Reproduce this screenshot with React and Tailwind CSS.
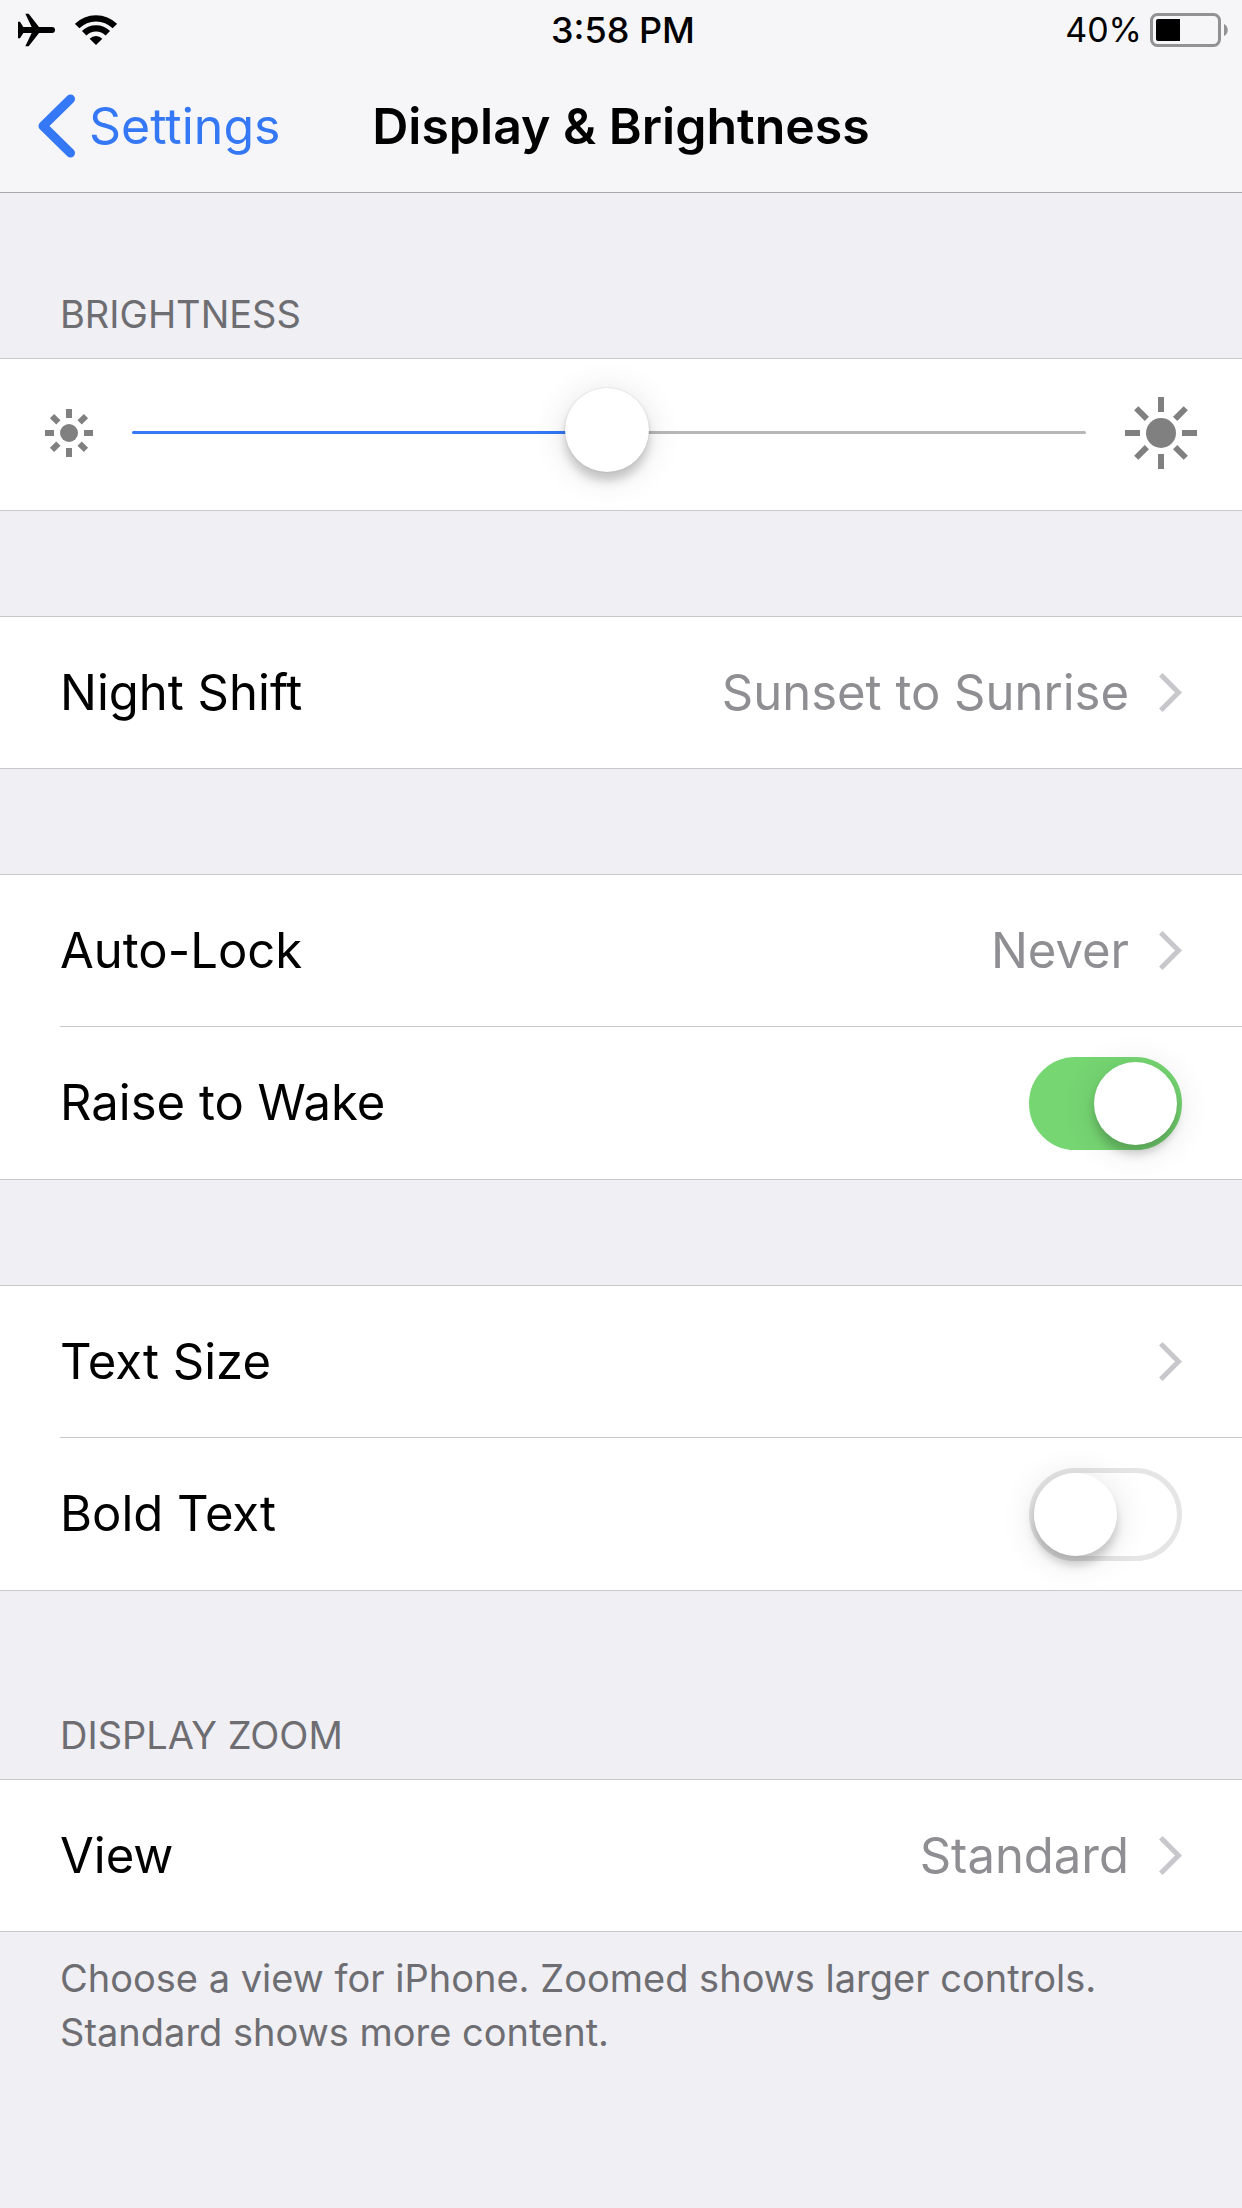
import React, { useState } from "react";

const RAYS = [0, 45, 90, 135, 180, 225, 270, 315];

function AirplaneIcon() {
  return (
    <svg viewBox="0 0 111 102" className="h-[34px] w-[37px]" aria-hidden="true">
      <path d="M0 26H6L16 42H41L22 2H32L63 42H102a9 9 0 0 1 0 18H63L32 100H22L41 60H16L6 76H0Z" />
    </svg>
  );
}

function WifiIcon() {
  return (
    <svg viewBox="0 0 126 90" className="h-[30px] w-[42px]" fill="none" stroke="black" aria-hidden="true">
      <path d="M6.4 33.4a80 80 0 0 1 113.2 0" strokeWidth="19" />
      <path d="M27.6 54.6a50 50 0 0 1 70.8 0" strokeWidth="19" />
      <path d="M43.9 70.9a27 27 0 0 1 38.2 0L63 90Z" fill="black" stroke="none" />
    </svg>
  );
}

function BatteryIcon() {
  return (
    <svg viewBox="0 0 78 34" className="h-[34px] w-[78px]" aria-hidden="true">
      <rect x="1.5" y="1.5" width="68" height="31" rx="6" fill="none" stroke="#929294" strokeWidth="3" />
      <path d="M8 6H30V28H8a2 2 0 0 1-2-2V8a2 2 0 0 1 2-2Z" />
      <path d="M74 11c5 2 5 10 0 12Z" fill="#929294" />
    </svg>
  );
}

function SunIcon({ size }) {
  const big = size === "lg";
  const center = big ? 36 : 24;
  const inner = big ? 21 : 15;
  return (
    <svg
      viewBox={big ? "0 0 72 72" : "0 0 48 48"}
      className={big ? "size-[72px] shrink-0" : "size-12 shrink-0"}
      fill="#808080"
      aria-hidden="true"
    >
      <circle cx={center} cy={center} r={big ? 15 : 9} />
      {RAYS.map((deg) => (
        <path
          key={deg}
          d={`M${center - 3} 0h6v${center - inner}h-6Z`}
          transform={`rotate(${deg} ${center} ${center})${deg % 90 ? ` translate(0 ${big ? 1 : 0})` : ""}`}
        />
      ))}
    </svg>
  );
}

function Chevron() {
  return (
    <svg viewBox="0 0 23 39" className="h-[39px] w-[23px] shrink-0" fill="none" aria-hidden="true">
      <path d="M1.8 1.8 19.5 19.5 1.8 37.2" stroke="#c7c7cc" strokeWidth="5" />
    </svg>
  );
}

function Group({ title, footer, className, children }) {
  return (
    <section className={className}>
      {title && <h2 className="px-[60px] pb-5 text-[38px] leading-[48px] text-[#6d6d72] uppercase">{title}</h2>}
      <div className="border-y border-[#c8c7cc] bg-white">{children}</div>
      {footer && <p className="px-[60px] pt-[19px] text-[38px] leading-[54px] text-[#6d6d72]">{footer}</p>}
    </section>
  );
}

function LinkRow({ label, value }) {
  return (
    <a href="#" className="flex h-[151px] items-center gap-[30px] px-[60px]">
      <span className="grow">{label}</span>
      {value && <span className="text-[#8e8e93]">{value}</span>}
      <Chevron />
    </a>
  );
}

function SwitchRow({ id, label, checked, onChange }) {
  return (
    <div className="ml-[60px] flex h-[153px] items-center justify-between border-t border-[#c8c7cc] pr-[60px]">
      <label htmlFor={id}>{label}</label>
      <input
        id={id}
        type="checkbox"
        role="switch"
        checked={checked}
        onChange={(e) => onChange(e.target.checked)}
        className="h-[93px] w-[153px] appearance-none rounded-full border-5 border-[#e5e5e5] bg-white before:block before:size-[83px] before:rounded-full before:bg-white before:shadow-[0_4px_36px_rgba(0,0,0,0.12),0_9px_10px_rgba(0,0,0,0.18)] checked:border-[#76d672] checked:bg-[#76d672] checked:before:translate-x-[60px]"
      />
    </div>
  );
}

export default function App() {
  const [brightness, setBrightness] = useState(49.8);
  const [raiseToWake, setRaiseToWake] = useState(true);
  const [boldText, setBoldText] = useState(false);

  return (
    <div className="min-h-screen bg-[#efeff4] pb-20 font-['Inter',sans-serif] text-[49px] leading-[60px] text-black">
      <header className="border-b border-[#a7a7aa] bg-[#f6f6f8]">
        <div className="grid h-[60px] grid-cols-3 items-center pr-[14px] pl-[18px] text-[34px] leading-[42px]">
          <div className="flex items-center gap-5">
            <AirplaneIcon />
            <WifiIcon />
          </div>
          <div className="text-center text-[36px] font-medium">3:58 PM</div>
          <div className="flex items-center justify-end gap-2">
            <span>40%</span>
            <BatteryIcon />
          </div>
        </div>

        <nav className="grid h-[132px] grid-cols-[1fr_auto_1fr] items-center px-[38px] text-[50px]">
          <a href="#" className="flex items-center gap-[13px] text-[#3478f6]">
            <svg viewBox="0 0 38 64" className="h-16 w-[38px]" fill="none" aria-hidden="true">
              <path
                d="M32.5 5 5 32 32.5 59"
                stroke="currentColor"
                strokeWidth="9"
                strokeLinecap="round"
                strokeLinejoin="round"
              />
            </svg>
            Settings
          </a>
          <h1 className="font-semibold">Display &amp; Brightness</h1>
        </nav>
      </header>

      <main>
        <Group title="Brightness" className="mt-[97px]">
          <div className="flex h-[151px] items-center gap-[39px] px-[45px] pb-1">
            <SunIcon size="sm" />
            <input
              type="range"
              aria-label="Brightness"
              min="0"
              max="100"
              step="0.1"
              value={brightness}
              onChange={(e) => setBrightness(Number(e.target.value))}
              style={{ "--fill": `${brightness}%` }}
              className="h-[84px] min-w-0 grow appearance-none bg-transparent [&::-webkit-slider-runnable-track]:h-[3px] [&::-webkit-slider-runnable-track]:rounded-full [&::-webkit-slider-runnable-track]:bg-[linear-gradient(to_right,#3478f6_var(--fill),#b7b7b7_var(--fill))] [&::-webkit-slider-thumb]:mt-[-43px] [&::-webkit-slider-thumb]:size-[84px] [&::-webkit-slider-thumb]:appearance-none [&::-webkit-slider-thumb]:rounded-full [&::-webkit-slider-thumb]:bg-white [&::-webkit-slider-thumb]:shadow-[0_0_2px_rgba(0,0,0,0.15),0_4px_36px_rgba(0,0,0,0.12),0_9px_10px_rgba(0,0,0,0.18)]"
            />
            <SunIcon size="lg" />
          </div>
        </Group>

        <Group className="mt-[105px]">
          <LinkRow label="Night Shift" value="Sunset to Sunrise" />
        </Group>

        <Group className="mt-[105px]">
          <LinkRow label="Auto-Lock" value="Never" />
          <SwitchRow id="raise-to-wake" label="Raise to Wake" checked={raiseToWake} onChange={setRaiseToWake} />
        </Group>

        <Group className="mt-[105px]">
          <LinkRow label="Text Size" />
          <SwitchRow id="bold-text" label="Bold Text" checked={boldText} onChange={setBoldText} />
        </Group>

        <Group
          title="Display Zoom"
          footer="Choose a view for iPhone. Zoomed shows larger controls. Standard shows more content."
          className="mt-[120px]"
        >
          <LinkRow label="View" value="Standard" />
        </Group>
      </main>
    </div>
  );
}
